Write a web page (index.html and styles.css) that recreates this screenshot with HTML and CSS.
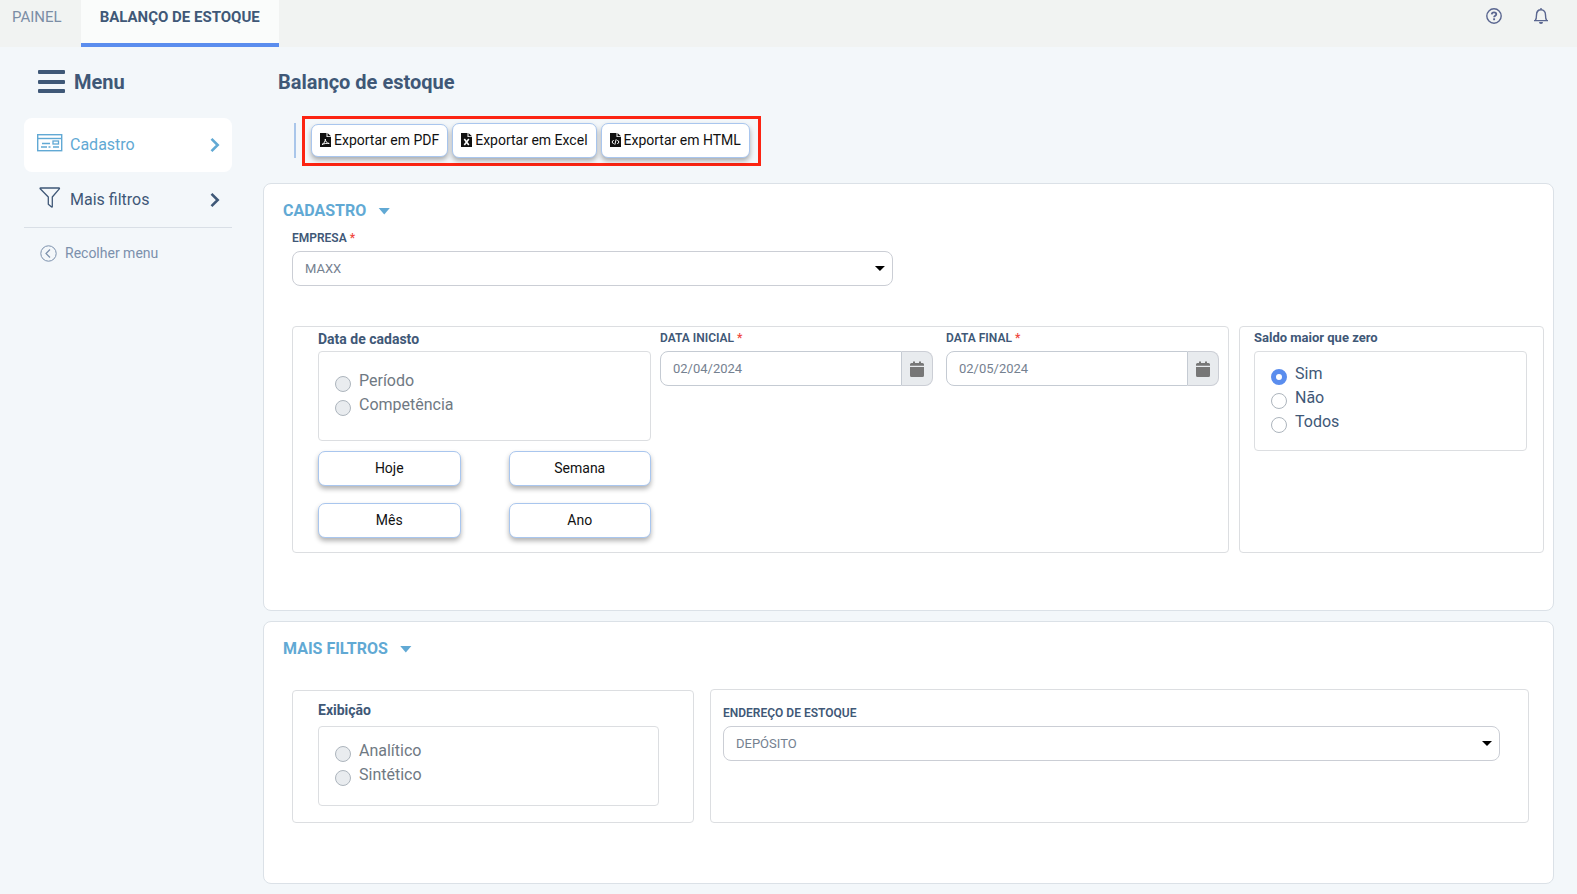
FILE: index.html
```html
<!DOCTYPE html>
<html lang="pt-BR">
<head>
<meta charset="utf-8">
<meta name="viewport" content="width=device-width, initial-scale=1">
<title>Balanço de estoque</title>
<link rel="stylesheet" href="styles.css">
</head>
<body>
<header class="topbar">
  <nav class="tabs">
    <a class="tab" href="#painel">PAINEL</a>
    <a class="tab tab-active" href="#balanco">BALANÇO DE ESTOQUE</a>
  </nav>
  <div class="top-actions">
    <button class="icon-button" type="button" aria-label="Ajuda">
      <svg width="16" height="16" viewBox="0 0 16 16" fill="none" stroke="currentColor"><circle cx="8" cy="8" r="7.2" stroke-width="1.4"/><path d="M5.7 6.4C5.8 5 6.800 4.300 8 4.300s2.300.7 2.300 1.900c0 1.500-2.200 1.500-2.200 3" stroke-width="1.800"/><path d="M8.100 10.300v1.900" stroke-width="1.900"/></svg>
    </button>
    <button class="icon-button" type="button" aria-label="Notificações">
      <svg width="16" height="16" viewBox="0 0 16 16" fill="none" stroke="currentColor" stroke-width="1.400"><path d="M8 0v1.500M1 12.600h14M2.300 12.300C3.500 11 3.500 9.500 3.500 7c0-3 1.700-5.200 4.500-5.200S12.500 4 12.500 7c0 2.500 0 4 1.200 5.300"/><path d="M6 14h4a2 2 0 0 1-4 0z" fill="currentColor" stroke="none"/></svg>
    </button>
  </div>
</header>

<div class="layout">
  <aside class="sidebar">
    <button class="menu-title" type="button">
      <svg width="27" height="24" viewBox="0 0 27 24" fill="currentColor"><rect y="0" width="27" height="4" rx="1"/><rect y="10" width="27" height="4" rx="1"/><rect y="19" width="27" height="4" rx="1"/></svg>
      <span>Menu</span>
    </button>
    <nav class="menu">
      <a class="menu-item menu-item-active" href="#cadastro">
        <svg class="menu-icon" width="26" height="20" viewBox="0 0 26 20" fill="none" stroke="currentColor"><rect x=".7" y="1.700" width="24" height="16" stroke-width="1.400"/><path d="M1 5.500h24" stroke-width="1.400"/><path d="M5 10.500h8M4 14h6M11.500 14h2M16 14h6" stroke-width="1.300"/><rect x="16" y="8" width="5.500" height="3" stroke-width="1.300"/></svg>
        <span class="menu-label">Cadastro</span>
        <svg width="10" height="16" viewBox="0 0 10 16" fill="none" stroke="currentColor" stroke-width="2.600"><path d="M1.500 1.800 7.700 8l-6.200 6.200"/></svg>
      </a>
      <a class="menu-item" href="#filtros">
        <svg class="menu-icon" width="26" height="22" viewBox="0 0 26 22" fill="none" stroke="currentColor" stroke-width="1.300" stroke-linejoin="round"><path d="M3.500 1h18.500q.8 0 .3.800L15.300 10v9.500q0 .8-.7.500l-3.300-2.700V10L3.200 1.800Q2.800 1 3.500 1z"/></svg>
        <span class="menu-label">Mais filtros</span>
        <svg width="10" height="16" viewBox="0 0 10 16" fill="none" stroke="currentColor" stroke-width="2.600"><path d="M1.500 1.800 7.700 8l-6.200 6.200"/></svg>
      </a>
    </nav>
    <button class="collapse" type="button">
      <svg width="17" height="17" viewBox="0 0 17 17" fill="none" stroke="currentColor"><circle cx="8.500" cy="8.500" r="7.700"/><path d="M10 4.500 6 8.500l4 4" stroke-width="1.200"/></svg>
      <span>Recolher menu</span>
    </button>
  </aside>

  <main class="content">
    <h1 class="page-title">Balanço de estoque</h1>
    <div class="export-bar">
      <div class="export-group">
        <button class="button button-export button-short" type="button">
          <svg width="11" height="14" viewBox="0 0 11 14"><path fill="#111" d="M0 0h6.500v4H11v10H0zM7.500 0 11 3.200H7.500z"/><path d="M2 11.500c2-1 3.500-3.500 3.300-5.500.1 2.500 1.500 4.200 3.900 4.500-2.400-.4-4.800 0-7.200 1z" fill="none" stroke="#fff"/></svg>
          Exportar em PDF
        </button>
        <button class="button button-export" type="button">
          <svg width="11" height="14" viewBox="0 0 11 14"><path fill="#111" d="M0 0h6.500v4H11v10H0zM7.500 0 11 3.200H7.500z"/><path d="m3.300 6 4.500 6M7.800 6l-4.500 6" fill="none" stroke="#fff" stroke-width="1.600"/></svg>
          Exportar em Excel
        </button>
        <button class="button button-export" type="button">
          <svg width="11" height="14" viewBox="0 0 11 14"><path fill="#111" d="M0 0h6.500v4H11v10H0zM7.500 0 11 3.200H7.500z"/><path d="M3.600 7 2 9l1.600 2M7.400 7 9 9l-1.600 2M6.200 6.300l-1.400 5.400" fill="none" stroke="#fff"/></svg>
          Exportar em HTML
        </button>
      </div>
    </div>

    <section class="card card-main" id="cadastro">
      <h2 class="card-title"><span>CADASTRO</span><span class="caret caret-title"></span></h2>
      <div class="field field-company">
        <label class="label" for="empresa">EMPRESA <span class="required">*</span></label>
        <div class="select-box">
          <select class="control" id="empresa"><option>MAXX</option></select>
          <span class="caret"></span>
        </div>
      </div>
      <div class="main-groups">
        <div class="group group-dates">
          <div class="date-kind">
            <h3 class="legend" id="kind">Data de cadasto</h3>
            <div class="options options-kind" role="radiogroup" aria-labelledby="kind">
              <label class="option option-off"><input class="radio" type="radio" name="kind" disabled>Período</label>
              <label class="option option-off"><input class="radio" type="radio" name="kind" disabled>Competência</label>
            </div>
            <div class="ranges">
              <button class="button" type="button">Hoje</button>
              <button class="button" type="button">Semana</button>
              <button class="button" type="button">Mês</button>
              <button class="button" type="button">Ano</button>
            </div>
          </div>
          <div class="field field-start">
            <label class="label" for="inicio">DATA INICIAL <span class="required">*</span></label>
            <div class="date-box">
              <input class="control control-date" id="inicio" type="text" value="02/04/2024">
              <button class="date-button" type="button" aria-label="Abrir calendário inicial"><svg width="14" height="16" viewBox="0 0 14 16" fill="currentColor"><path d="M0 4.700V3.500Q0 2 1.500 2H3V.4h2V2h4V.4h2V2h1.500Q14 2 14 3.500v1.200zM0 6h14v8.500q0 1.500-1.500 1.500h-11Q0 16 0 14.500z"/></svg></button>
            </div>
          </div>
          <div class="field">
            <label class="label" for="fim">DATA FINAL <span class="required">*</span></label>
            <div class="date-box">
              <input class="control control-date" id="fim" type="text" value="02/05/2024">
              <button class="date-button" type="button" aria-label="Abrir calendário final"><svg width="14" height="16" viewBox="0 0 14 16" fill="currentColor"><path d="M0 4.700V3.500Q0 2 1.500 2H3V.4h2V2h4V.4h2V2h1.500Q14 2 14 3.500v1.200zM0 6h14v8.500q0 1.500-1.500 1.500h-11Q0 16 0 14.500z"/></svg></button>
            </div>
          </div>
        </div>
        <div class="group group-balance">
          <h3 class="legend legend-small" id="saldo">Saldo maior que zero</h3>
          <div class="options options-balance" role="radiogroup" aria-labelledby="saldo">
            <label class="option"><input class="radio" type="radio" name="saldo" checked>Sim</label>
            <label class="option"><input class="radio" type="radio" name="saldo">Não</label>
            <label class="option"><input class="radio" type="radio" name="saldo">Todos</label>
          </div>
        </div>
      </div>
    </section>

    <section class="card card-filters" id="filtros">
      <h2 class="card-title"><span>MAIS FILTROS</span><span class="caret caret-title"></span></h2>
      <div class="filter-groups">
        <div class="group group-view">
          <h3 class="legend" id="exibicao">Exibição</h3>
          <div class="options options-view" role="radiogroup" aria-labelledby="exibicao">
            <label class="option option-off"><input class="radio" type="radio" name="view" disabled>Analítico</label>
            <label class="option option-off"><input class="radio" type="radio" name="view" disabled>Sintético</label>
          </div>
        </div>
        <div class="group group-address">
          <div class="field">
            <label class="label" for="endereco">ENDEREÇO DE ESTOQUE</label>
            <div class="select-box">
              <select class="control" id="endereco"><option>DEPÓSITO</option></select>
              <span class="caret"></span>
            </div>
          </div>
        </div>
      </div>
    </section>
  </main>
</div>
</body>
</html>
```

FILE: styles.css
```css
:root {
  --ink: #3f5877;
  --sky: #61a9d4;
  --line: #dcdee1;
  --control-line: #cbced5;
  --accent: #5a8dee;
}

* {
  box-sizing: border-box;
}

body {
  margin: 0;
  background: #f3f7fa;
  color: var(--ink);
  font-family: Roboto, "Liberation Sans", sans-serif;
  font-size: 16px;
  line-height: 24px;
}

button,
input,
select {
  font: inherit;
  color: inherit;
}

a {
  color: inherit;
  text-decoration: none;
}

h1,
h2,
h3 {
  margin: 0;
}

svg {
  flex: none;
}

.topbar {
  display: flex;
  justify-content: space-between;
  height: 47px;
  background: #f1f3f2;
}

.tabs {
  display: flex;
}

.tab {
  padding: 5px 19px 0 12px;
  color: #7b8da5;
  font-size: 15px;
}

.tab-active {
  padding: 5px 19px 0;
  border-bottom: 4px solid var(--accent);
  background: #fafcfb;
  color: var(--ink);
  font-weight: 700;
}

.top-actions {
  display: flex;
  align-items: flex-start;
  gap: 31px;
  padding: 8px 28px;
}

.icon-button {
  display: flex;
  padding: 0;
  border: 0;
  background: none;
  color: #5a6690;
}

.layout {
  display: flex;
}

.sidebar {
  flex: none;
  width: 263px;
  padding: 23px 31px 0 24px;
}

.menu-title {
  display: flex;
  align-items: center;
  gap: 9px;
  padding: 0 14px;
  border: 0;
  background: none;
  font-size: 20px;
  font-weight: 700;
}

.menu {
  display: grid;
  gap: 1px;
  margin-top: 24px;
  border-bottom: 1px solid #d9dfe6;
}

.menu-item {
  display: flex;
  align-items: center;
  height: 54px;
  padding: 0 12px 0 13px;
  border-radius: 8px;
}

.menu-item-active {
  background: #fff;
  color: var(--sky);
}

.menu-icon {
  margin: 0 7px 4px 0;
}

.menu-label {
  flex: 1;
}

.collapse {
  display: flex;
  align-items: center;
  gap: 8px;
  margin-top: 13px;
  padding: 0 16px;
  border: 0;
  background: none;
  color: #7b90ac;
  font-size: 14px;
}

.content {
  flex: 1;
  min-width: 0;
  padding: 23px 23px 10px 0;
}

.page-title {
  padding-left: 15px;
  font-size: 20px;
  font-weight: 700;
  line-height: 24px;
}

.export-bar {
  display: flex;
  align-items: center;
  gap: 6px;
  margin: 22px 0 17px 31px;
}

.export-bar::before {
  content: "";
  width: 2px;
  height: 35px;
  margin-bottom: 1px;
  background: #a9c6ea;
}

.export-group {
  display: flex;
  align-items: center;
  gap: 4px;
  height: 50px;
  padding: 0 8px 1px 6px;
  border: 3px solid #fc2412;
}

.button {
  height: 35px;
  padding: 0 9px 1px;
  border: 1px solid #a9c6ee;
  border-radius: 7px;
  background: #fff;
  box-shadow: 0 3px 5px rgba(0, 0, 0, 0.3);
  color: #111;
  font-size: 14px;
  line-height: 20px;
}

.button-export {
  display: flex;
  align-items: center;
  gap: 3px;
  padding: 0 8px 2px;
  white-space: nowrap;
}

.button-short {
  height: 33px;
}

.card {
  border: 1px solid #dbe1e7;
  border-radius: 8px;
  background: #fff;
}

.card-main {
  margin-bottom: 10px;
  padding: 15px 9px 57px 28px;
}

.card-filters {
  padding: 15px 24px 60px 28px;
}

.card-title {
  display: flex;
  align-items: center;
  gap: 12px;
  margin-left: -9px;
  color: var(--sky);
  font-size: 16px;
  font-weight: 700;
  line-height: 24px;
}

.caret {
  width: 10px;
  height: 5px;
  background: #000;
  clip-path: polygon(0 0, 100% 0, 50% 100%);
}

.caret-title {
  width: 12px;
  height: 7px;
  background: var(--sky);
}

.label {
  display: block;
  margin-bottom: 4px;
  font-size: 12px;
  font-weight: 600;
  line-height: 18px;
}

.required {
  color: #f0493e;
}

.field-company {
  width: 48%;
  margin-top: 6px;
}

.select-box {
  display: grid;
  align-items: center;
}

.select-box > * {
  grid-area: 1 / 1;
}

.select-box .caret {
  justify-self: end;
  margin-right: 8px;
  pointer-events: none;
}

.control {
  width: 100%;
  min-width: 0;
  height: 35px;
  padding: 0 12px;
  border: 1px solid var(--control-line);
  border-radius: 8px;
  appearance: none;
  background: #fff;
  color: #758190;
  font-size: 13px;
}

.main-groups {
  display: grid;
  grid-template-columns: 937fr 305fr;
  gap: 10px;
  margin-top: 40px;
}

.group {
  border: 1px solid var(--line);
  border-radius: 4px;
}

.group-dates {
  display: grid;
  grid-template-columns: 342fr 286fr 273fr;
  padding: 2px 9px 14px 25px;
}

.date-kind {
  padding-right: 9px;
}

.field-start {
  padding-right: 13px;
}

.legend {
  margin-bottom: 2px;
  font-size: 14px;
  font-weight: 700;
  line-height: 20px;
}

.legend-small {
  margin-bottom: 4px;
  font-size: 13px;
  line-height: 18px;
}

.options {
  border: 1px solid var(--line);
  border-radius: 4px;
}

.options-kind {
  margin-bottom: 10px;
  padding: 17px 16px 23px;
}

.options-balance {
  padding: 10px 16px 16px;
}

.options-view {
  padding: 12px 16px 18px;
}

.option {
  display: flex;
  align-items: flex-end;
  gap: 8px;
}

.option-off {
  color: #6f7983;
}

.radio {
  flex: none;
  width: 16px;
  height: 16px;
  margin: 0 0 1px;
  border: 1px solid #adb5bd;
  border-radius: 50%;
  appearance: none;
  background: #fff;
}

.radio:disabled {
  background: #e9ecef;
}

.radio:checked {
  border: 5px solid var(--accent);
}

.ranges {
  display: grid;
  grid-template-columns: 1fr 1fr;
  gap: 17px 48px;
}

.date-box {
  display: flex;
}

.control-date {
  border-color: #c5cbd3;
  border-radius: 8px 0 0 8px;
}

.date-button {
  display: flex;
  flex: none;
  align-items: center;
  justify-content: center;
  width: 31px;
  padding: 0;
  border: 1px solid var(--control-line);
  border-left: 0;
  border-radius: 0 8px 8px 0;
  background: #e8ebee;
  color: #777;
}

.group-balance {
  padding: 2px 16px 16px 14px;
}

.filter-groups {
  display: grid;
  grid-template-columns: 402fr 819fr;
  gap: 16px;
  margin-top: 28px;
}

.group-view {
  margin-top: 1px;
  padding: 9px 34px 16px 25px;
}

.group-view .legend {
  margin-bottom: 6px;
}

.group-address {
  padding: 14px 28px 16px 12px;
}
```
